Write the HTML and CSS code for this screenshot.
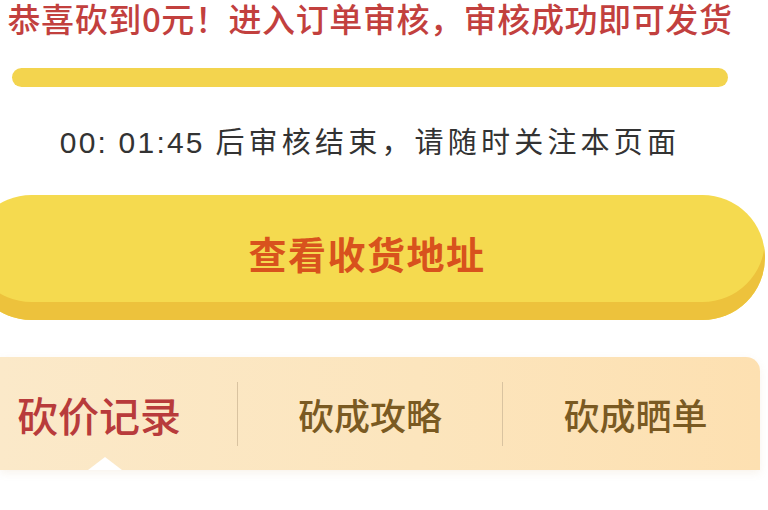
FILE: index.html
```html
<!DOCTYPE html>
<html lang="zh-CN">
<head>
<meta charset="utf-8">
<title>砍价</title>
<link rel="stylesheet" href="styles.css">
</head>
<body>
<div class="page">
  <div class="title">恭喜砍到0元！进入订单审核，审核成功即可发货</div>
  <div class="progress"></div>
  <div class="timer"><span class="digits">00: 01:45</span> 后审核结束，请随时关注本页面</div>
  <div class="btn-wrap">
    <div class="btn">查看收货地址</div>
  </div>
  <div class="tabs">
    <div class="tab tab-active">砍价记录</div>
    <div class="tab tab-mid">砍成攻略</div>
    <div class="tab tab-last">砍成晒单</div>
    <div class="notch"></div>
  </div>
</div>
</body>
</html>
```

FILE: styles.css
```css
html, body {
  margin: 0;
  padding: 0;
  background: #ffffff;
  overflow: hidden;
}
body {
  font-family: "Noto Sans CJK SC", "Noto Sans", sans-serif;
}
.page {
  width: 768px;
  height: 510px;
  overflow: hidden;
}
.title {
  width: 740px;
  height: 35px;
  padding-top: 1px;
  box-sizing: border-box;
  text-align: center;
  font-size: 33px;
  line-height: 34px;
  letter-spacing: 0.6px;
  font-weight: 500;
  color: #c2403e;
  white-space: nowrap;
}
.progress {
  margin: 33px 0 0 12px;
  width: 716px;
  height: 19px;
  border-radius: 10px;
  background: #f3d44e;
}
.timer {
  width: 740px;
  height: 40px;
  text-align: center;
  margin-top: 33px;
  font-size: 29px;
  line-height: 40px;
  letter-spacing: 4.2px;
  color: #333333;
  white-space: nowrap;
}
.digits {
  font-family: "Liberation Sans", "Noto Sans CJK SC", sans-serif;
  font-size: 30px;
  line-height: 1;
  letter-spacing: 2.2px;
}
.btn-wrap {
  margin-top: 35px;
  margin-left: -31px;
  width: 796px;
}
.btn {
  height: 125px;
  border-radius: 63px;
  background: #f5da4f;
  box-shadow: inset 0 -18px 0 #edc23c;
  display: flex;
  align-items: center;
  justify-content: center;
  padding-bottom: 10px;
  box-sizing: border-box;
  font-size: 38px;
  font-weight: 700;
  color: #d8521d;
  letter-spacing: 1.5px;
}
.tabs {
  position: relative;
  margin-top: 37px;
  width: 760px;
  height: 113px;
  border-top-right-radius: 14px;
  background: linear-gradient(90deg, #fbe9c9 0%, #fce5bd 55%, #fde0b1 100%);
  box-shadow: 0 3px 8px rgba(200, 160, 100, 0.12);
  display: grid;
  grid-template-columns: 237px 265px 258px;
  align-items: center;
}
.tab {
  height: 64px;
  display: flex;
  align-items: center;
  justify-content: center;
  font-size: 36px;
  font-weight: 500;
  color: #7a5a22;
  white-space: nowrap;
}
.tab-active {
  justify-content: flex-start;
  padding-left: 17px;
  font-size: 41px;
  color: #b83b3b;
}
.tab-mid, .tab-last {
  border-left: 1.5px solid #d9c3a0;
}
.tab-last {
  padding-left: 8px;
}
.notch {
  position: absolute;
  left: 88px;
  bottom: 0;
  width: 0;
  height: 0;
  border-left: 17px solid transparent;
  border-right: 17px solid transparent;
  border-bottom: 13px solid #ffffff;
}
```
